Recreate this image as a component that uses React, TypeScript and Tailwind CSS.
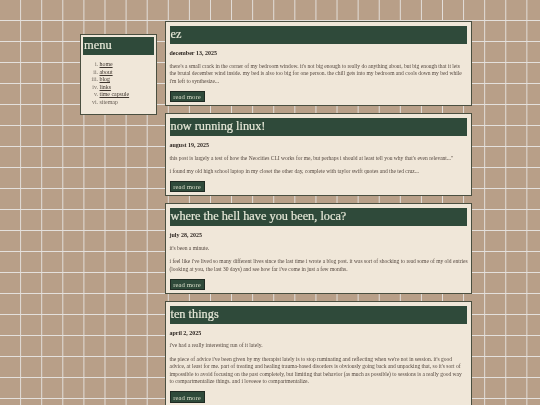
const menu = [
  { n: "i.", label: "home", link: true },
  { n: "ii.", label: "about", link: true },
  { n: "iii.", label: "blog", link: true },
  { n: "iv.", label: "links", link: true },
  { n: "v.", label: "time capsule", link: true },
  { n: "vi.", label: "sitemap", link: false },
]

// each paragraph is a list of lines, the breaks follow the picture
const posts = [
  {
    title: "ez",
    date: "december 13, 2025",
    paras: [
      [
        "there's a small crack in the corner of my bedroom window. it's not big enough to really do anything about, but big enough that it lets",
        "the brutal december wind inside. my bed is also too big for one person. the chill gets into my bedroom and cools down my bed while",
        "i'm left to synthesize...",
      ],
    ],
  },
  {
    title: "now running linux!",
    date: "august 19, 2025",
    paras: [
      ["this post is largely a test of how the Neocities CLI works for me, but perhaps i should at least tell you why that's even relevant...\""],
      ["i found my old high school laptop in my closet the other day, complete with taylor swift quotes and the ted cruz..."],
    ],
  },
  {
    title: "where the hell have you been, loca?",
    date: "july 28, 2025",
    paras: [
      ["it's been a minute."],
      [
        "i feel like i've lived so many different lives since the last time i wrote a blog post. it was sort of shocking to read some of my old entries",
        "(looking at you, the last 30 days) and see how far i've come in just a few months.",
      ],
    ],
  },
  {
    title: "ten things",
    date: "april 2, 2025",
    paras: [
      ["i've had a really interesting run of it lately."],
      [
        "the piece of advice i've been given by my therapist lately is to stop ruminating and reflecting when we're not in session. it's good",
        "advice, at least for me. part of treating and healing trauma-based disorders is obviously going back and unpacking that, so it's sort of",
        "impossible to avoid focusing on the past completely, but limiting that behavior (as much as possible) to sessions is a really good way",
        "to compartmentalize things. and i loveeee to compartmentalize.",
      ],
    ],
  },
]

function Sidebar() {
  return (
    <aside className="mt-[33.5px] h-[81.5px] w-[77px] shrink-0 border border-[#4a4f40] bg-[#f0e7d9] px-[2px] pt-[2.5px]">
      <h2 className="h-[18px] bg-[#2f4a3a] pl-[1px] text-[12.5px] leading-[17px] text-[#e6e8d8] [-webkit-text-stroke:0.2px_#e6e8d8]">menu</h2>
      <ul className="mt-[6px] flex flex-col">
        {menu.map((item) => (
          <li key={item.label} className="flex h-[7.6px] items-center text-[5.9px] leading-[7.6px] whitespace-nowrap text-[#3f362f]">
            <span className="w-[15px] shrink-0 text-right opacity-70">{item.n}</span>
            <span className={item.link ? "ml-[1.5px] underline" : "ml-[1.5px] opacity-80"}>{item.label}</span>
          </li>
        ))}
      </ul>
    </aside>
  )
}

function Post({ title, date, paras }: { title: string; date: string; paras: string[][] }) {
  return (
    <article className="mb-[6.7px] w-[307px] border border-[#4a4f40] bg-[#f0e7d9] px-[4px] pt-[4px] pb-[3px]">
      <h1 className="h-[18px] bg-[#2f4a3a] pl-[1px] text-[12.3px] leading-[17px] text-[#e6e8d8] [-webkit-text-stroke:0.2px_#e6e8d8]">{title}</h1>
      <p className="mt-[5px] text-[6px] leading-[8px] font-bold text-[#2e2722]">{date}</p>
      <div className="mt-[5.7px] flex flex-col gap-[5.7px]">
        {paras.map((lines) => (
          <p key={lines[0]} className="text-[5.5px] leading-[7.6px] text-[#54473f]">
            {lines.map((line) => (
              <span key={line} className="block whitespace-nowrap">
                {line}
              </span>
            ))}
          </p>
        ))}
      </div>
      <button
        type="button"
        className="mt-[5.5px] block h-[11.3px] w-[35px] border border-[#1f2a22] bg-[#2f4a3a] text-center text-[6.8px] leading-[9px] text-[#d8dcc8]"
      >
        read more
      </button>
    </article>
  )
}

export default function App() {
  return (
    <div className="flex h-[405px] w-[540px] gap-[7.5px] overflow-hidden bg-[#b89f88] bg-[linear-gradient(to_right,transparent_20px,#e4e0dc_20px),linear-gradient(to_bottom,transparent_20px,#e4e0dc_20px)] bg-[size:21.1px_21px] pl-[80px] blur-[0.3px] [font-family:'Liberation_Serif',serif]">
      <Sidebar />
      <main className="pt-[21px]">
        {posts.map((post) => (
          <Post key={post.title} {...post} />
        ))}
      </main>
    </div>
  )
}
